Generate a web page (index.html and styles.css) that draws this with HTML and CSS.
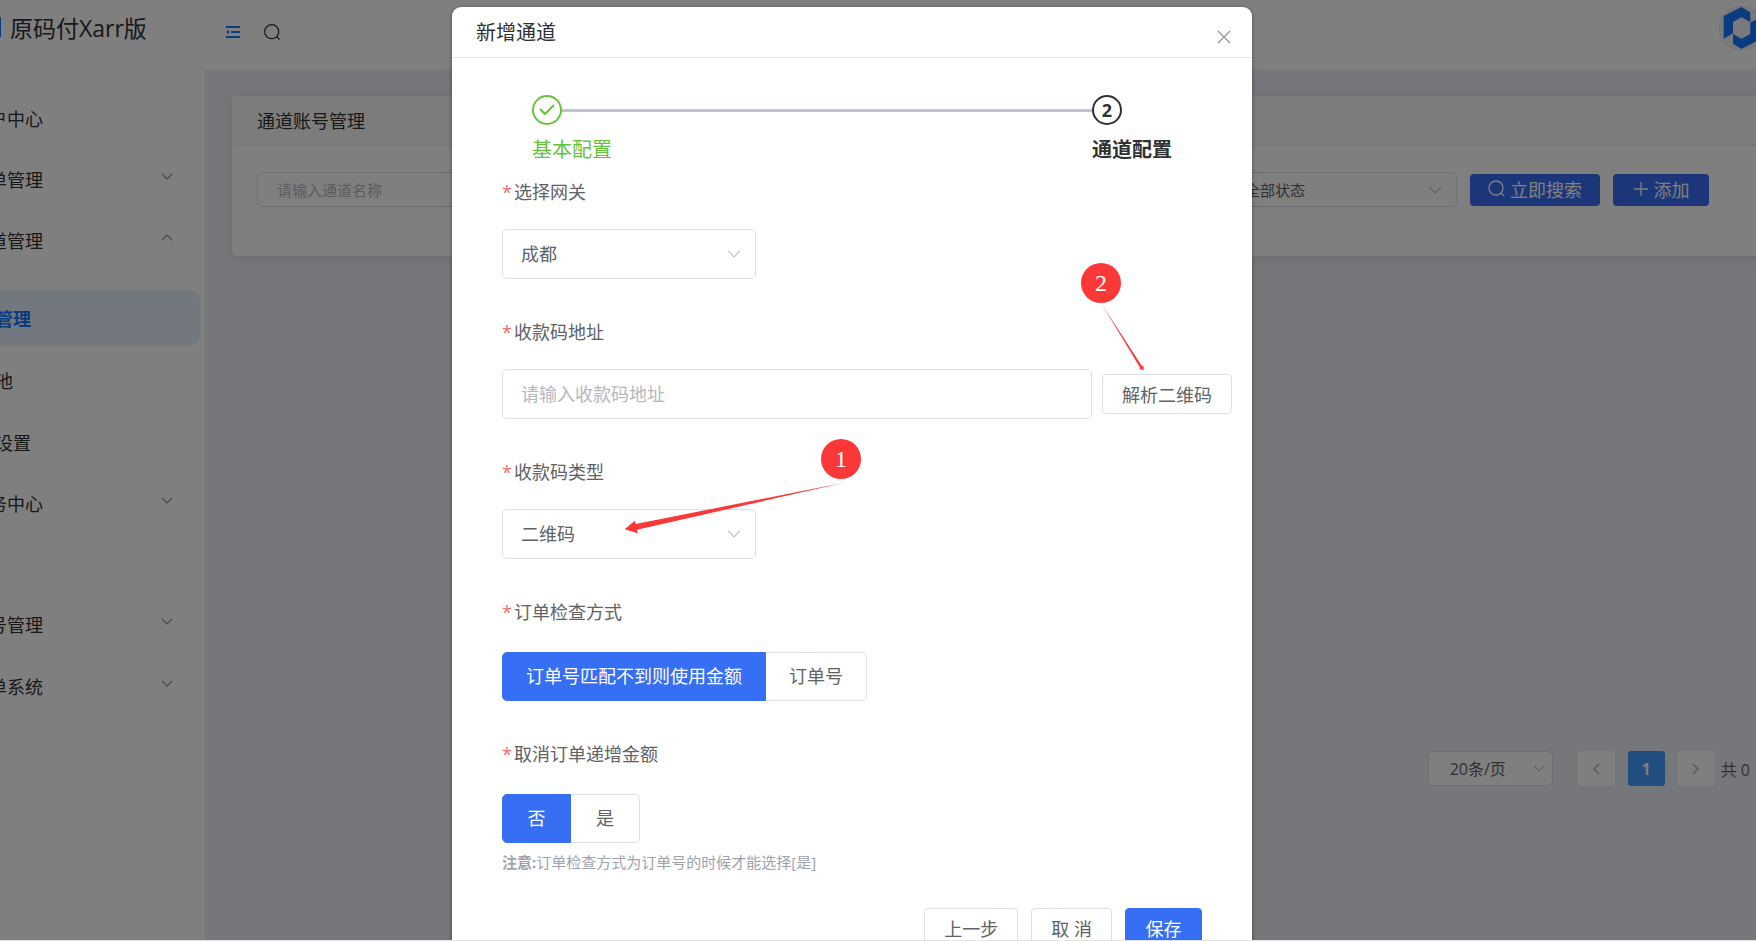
FILE: index.html
```html
<!DOCTYPE html>
<html lang="zh-CN">
<head>
    <meta charset="UTF-8">
    <meta name="viewport" content="width=device-width, initial-scale=1.0">
    <title>通道账号管理</title>
    <link rel="stylesheet" href="styles.css">
</head>
<body>
    <div class="app">
        <aside class="sidebar">
            <div class="brand">
                <span class="brand-mark"></span>
                <span class="brand-name">原码付Xarr版</span>
            </div>
            <nav class="menu">
                <a href="#" class="menu-item"><span>用户中心</span></a>
                <a href="#" class="menu-item"><span>订单管理</span>
                    <svg class="arrow" viewBox="0 0 12 7"><path d="M1 1l5 5 5-5"/></svg></a>
                <a href="#" class="menu-item"><span>通道管理</span>
                    <svg class="arrow" viewBox="0 0 12 7"><path d="M1 6l5-5 5 5"/></svg></a>
                <div class="submenu">
                    <a href="#" class="menu-item active"><span>账号管理</span></a>
                    <a href="#" class="menu-item"><span>轮询池</span></a>
                    <a href="#" class="menu-item"><span>通道设置</span></a>
                </div>
                <a href="#" class="menu-item"><span>服务中心</span>
                    <svg class="arrow" viewBox="0 0 12 7"><path d="M1 1l5 5 5-5"/></svg></a>
                <div class="menu-group">
                    <a href="#" class="menu-item"><span>账号管理</span>
                        <svg class="arrow" viewBox="0 0 12 7"><path d="M1 1l5 5 5-5"/></svg></a>
                    <a href="#" class="menu-item"><span>工单系统</span>
                        <svg class="arrow" viewBox="0 0 12 7"><path d="M1 1l5 5 5-5"/></svg></a>
                </div>
            </nav>
        </aside>

        <div class="main">
            <header class="topbar">
                <button class="icon-btn" aria-label="折叠菜单">
                    <svg width="14" height="12" viewBox="0 0 14 12" fill="#1677ff"><path d="M0 0h14v2H0zM5 5h9v2H5zM0 10h14v2H0zM0 6l3-2v4z"/></svg>
                </button>
                <button class="icon-btn" aria-label="搜索">
                    <svg width="16" height="16" viewBox="0 0 16 16" fill="none" stroke="#303133" stroke-width="1.2"><circle cx="7.7" cy="7.7" r="7"/><path d="M12.5 12.5l3 3"/></svg>
                </button>
                <svg class="avatar" viewBox="1437 18 135 135">
                    <circle cx="1504" cy="85" r="66" fill="#f2f5fa" stroke="#dcdfe6" stroke-width="2"/>
                    <path fill="#1677ff" d="M1451 48L1504 21L1531 37V66L1504 52L1479 66V100L1451 116ZM1557 120L1504 147L1479 131V102L1504 116L1531 102V68L1557 54Z"/>
                </svg>
            </header>

            <div class="content">
                <section class="card">
                    <h2 class="card-title">通道账号管理</h2>
                    <form class="search-form">
                        <input type="text" class="search-input" placeholder="请输入通道名称" aria-label="通道名称">
                        <div class="select-wrap status-select">
                            <select aria-label="状态"><option>全部状态</option></select>
                            <svg class="arrow" viewBox="0 0 14 8"><path d="M1 1l6 6 6-6"/></svg>
                        </div>
                        <button type="button" class="btn-small">
                            <svg width="17" height="17" viewBox="0 0 17 17"><circle cx="8" cy="8" r="7"/><path d="M13 13l3 3"/></svg>立即搜索</button>
                        <button type="button" class="btn-small">
                            <svg width="16" height="16" viewBox="0 0 16 16"><path d="M8 1v14M1 8h14"/></svg>添加</button>
                    </form>
                </section>

                <div class="pagination">
                    <div class="select-wrap page-size">
                        <select aria-label="每页条数"><option>20条/页</option></select>
                        <svg class="arrow" viewBox="0 0 12 7"><path d="M1 1l5 5 5-5"/></svg>
                    </div>
                    <button class="page-btn" aria-label="上一页"><svg width="8" height="12" viewBox="0 0 8 12"><path d="M7 1L2 6l5 5"/></svg></button>
                    <button class="page-btn current">1</button>
                    <button class="page-btn" aria-label="下一页"><svg width="8" height="12" viewBox="0 0 8 12"><path d="M1 1l5 5-5 5"/></svg></button>
                    <span class="total">共 0</span>
                </div>
            </div>
        </div>
    </div>

    <div class="overlay">
        <div class="modal" role="dialog" aria-labelledby="modalTitle">
            <div class="modal-header">
                <h3 id="modalTitle">新增通道</h3>
                <button class="close-btn" aria-label="关闭">
                    <svg width="14" height="14" viewBox="0 0 14 14"><path d="M1 1l12 12M13 1L1 13"/></svg>
                </button>
            </div>

            <div class="steps">
                <div class="step done">
                    <div class="step-head">
                        <span class="step-icon"><svg width="16" height="12" viewBox="0 0 16 12"><path d="M1.500 5.500L6 10l8.500-8.500"/></svg></span>
                        <span class="step-line"></span>
                    </div>
                    <div class="step-title">基本配置</div>
                </div>
                <div class="step current">
                    <div class="step-head"><span class="step-icon">2</span></div>
                    <div class="step-title">通道配置</div>
                </div>
            </div>

            <form class="modal-form">
                <div class="form-item">
                    <label class="form-label" for="gateway">选择网关</label>
                    <div class="select-wrap form-select">
                        <select id="gateway"><option>成都</option></select>
                        <svg class="arrow" viewBox="0 0 14 8"><path d="M1 1l6 6 6-6"/></svg>
                    </div>
                </div>
                <div class="form-item">
                    <label class="form-label" for="codeUrl">收款码地址</label>
                    <div class="code-row">
                        <input type="text" id="codeUrl" placeholder="请输入收款码地址">
                        <button type="button" class="btn">解析二维码</button>
                    </div>
                </div>
                <div class="form-item">
                    <label class="form-label" for="codeType">收款码类型</label>
                    <div class="select-wrap form-select">
                        <select id="codeType"><option>二维码</option></select>
                        <svg class="arrow" viewBox="0 0 14 8"><path d="M1 1l6 6 6-6"/></svg>
                    </div>
                </div>
                <div class="form-item" role="radiogroup" aria-labelledby="checkLabel">
                    <div class="form-label" id="checkLabel">订单检查方式</div>
                    <div class="radio-group">
                        <label><input type="radio" name="check" checked><span>订单号匹配不到则使用金额</span></label>
                        <label><input type="radio" name="check"><span>订单号</span></label>
                    </div>
                </div>
                <div class="form-item" role="radiogroup" aria-labelledby="cancelLabel">
                    <div class="form-label" id="cancelLabel">取消订单递增金额</div>
                    <div class="radio-group">
                        <label><input type="radio" name="cancel" checked><span>否</span></label>
                        <label><input type="radio" name="cancel"><span>是</span></label>
                    </div>
                    <p class="note"><b>注意:</b>订单检查方式为订单号的时候才能选择[是]</p>
                </div>
                <div class="modal-footer">
                    <button type="button" class="btn">上一步</button>
                    <button type="button" class="btn">取 消</button>
                    <button type="button" class="btn primary">保存</button>
                </div>
            </form>

            <!-- Guide marks -->
            <svg class="marks" width="800" height="600" viewBox="0 0 800 600">
                <path d="M393 475.500L183.700 517L182.700 513.700L172.700 522.300L185.700 526.300L185 522.700Z"/>
                <path d="M649.500 296.700L690 359.300L691.300 358.500L691.700 363.300L687.300 361.700L688 360.500Z"/>
            </svg>
            <span class="mark mark-one">1</span>
            <span class="mark mark-two">2</span>
        </div>
    </div>
</body>
</html>
```
FILE: styles.css
```css
* {
    box-sizing: border-box;
}
body {
    margin: 0;
    height: 100vh;
    overflow: hidden;
    position: relative;
    border-bottom: 1px solid #e4e4e6;
    font-family: "Open Sans", "Noto Sans CJK SC", sans-serif;
    font-size: 18px;
    color: #303133;
}
h2, h3, p {
    margin: 0;
    font-weight: normal;
}
a {
    color: inherit;
    text-decoration: none;
}
button, input, select {
    font: inherit;
    color: inherit;
}
button {
    cursor: pointer;
}
svg {
    flex: none;
}
.arrow {
    width: 12px;
    fill: none;
    stroke: #909399;
    stroke-width: 1.2;
}

/* Page behind the dialog, wider than the window on both sides */
.app {
    display: flex;
    height: 100%;
    margin: 0 -64px;
    background: #eceef4;
}
.sidebar {
    width: 269px;
    flex: none;
    background: #fff;
}
.brand {
    display: flex;
    align-items: center;
    gap: 9px;
    height: 54px;
    padding-left: 45px;
    font-size: 23px;
}
.brand-mark {
    width: 20px;
    height: 20px;
    background: #1677ff;
}
.menu {
    display: flex;
    flex-direction: column;
    gap: 5px;
    padding: 36px 5px 0 10px;
}
.menu-item {
    display: flex;
    align-items: center;
    justify-content: space-between;
    height: 56px;
    padding: 0 27px 0 25px;
    border-radius: 12px;
}
.menu-item .arrow {
    margin-bottom: 6px;
}
.submenu, .menu-group {
    display: flex;
    flex-direction: column;
    gap: 6px;
}
.submenu {
    margin-top: 17px;
}
.submenu .menu-item {
    padding-left: 13px;
}
.menu-group {
    margin-top: 60px;
}
.menu-item.active {
    background: #e6f0ff;
    color: #1677ff;
    font-weight: bold;
}
.main {
    flex: 1;
    display: flex;
    flex-direction: column;
}
.topbar {
    display: flex;
    align-items: center;
    gap: 24px;
    height: 70px;
    padding: 0 56px 6px 21px;
    background: #fff;
}
.icon-btn {
    display: flex;
    padding: 0;
    border: none;
    background: none;
}
.avatar {
    width: 45px;
    height: 45px;
    margin-left: auto;
    margin-bottom: 8px;
}
.content {
    flex: 1;
    display: flex;
    flex-direction: column;
    justify-content: space-between;
    padding: 26px 26px 154px 27px;
}
.card {
    background: #fff;
    border-radius: 5px;
    box-shadow: 0 2px 12px rgba(0, 0, 0, 0.1);
    padding-bottom: 49px;
}
.card-title {
    height: 50px;
    padding-left: 25px;
    line-height: 50px;
    font-size: 18px;
    background: #f9f9f9;
    border-bottom: 1px solid #ebebeb;
    border-radius: 5px;
}
.search-form {
    display: flex;
    align-items: center;
    gap: 13px;
    padding: 26px 85px 0 25px;
}
.search-input {
    flex: 1;
    height: 35px;
    padding: 0 19px;
    border: 1px solid #dcdfe6;
    border-radius: 5px;
    font-size: 15px;
    background: #fff;
}
::placeholder {
    color: #b4b8c0;
    opacity: 1;
}
.select-wrap {
    position: relative;
}
.select-wrap select {
    appearance: none;
    width: 100%;
    height: 100%;
    padding: 0 18px;
    border: 1px solid #dcdfe6;
    border-radius: 5px;
    background: #fff;
    color: #606266;
}
.select-wrap .arrow {
    position: absolute;
    right: 15px;
    top: 0;
    bottom: 0;
    width: 14px;
    margin: auto;
    stroke: #c0c4cc;
    pointer-events: none;
}
.status-select {
    width: 231px;
    height: 35px;
    font-size: 15px;
}
.btn-small {
    display: flex;
    align-items: center;
    justify-content: center;
    gap: 5px;
    min-width: 96px;
    height: 32px;
    padding: 0 18px 2px;
    border: none;
    border-radius: 4px;
    background: #366ef4;
    color: #fff;
}
.btn-small svg {
    fill: none;
    stroke: #fff;
    stroke-width: 1.3;
}
.pagination {
    display: flex;
    align-items: center;
    justify-content: flex-end;
    gap: 13px;
    padding-right: 44px;
    font-size: 16px;
    color: #606266;
}
.page-size {
    width: 125px;
    height: 35px;
    margin-right: 12px;
}
.page-size select {
    padding: 0 21px;
}
.page-size .arrow {
    right: 8px;
    width: 12px;
}
.page-btn {
    display: flex;
    align-items: center;
    justify-content: center;
    width: 37px;
    height: 35px;
    padding: 0;
    border: none;
    border-radius: 3px;
    background: #fff;
}
.page-btn svg {
    fill: none;
    stroke: #c0c4cc;
    stroke-width: 2;
}
.page-btn.current {
    background: #409eff;
    color: #fff;
    font-weight: bold;
}
.total {
    margin-left: -7px;
}

/* Dialog */
.overlay {
    position: absolute;
    inset: 0;
    display: flex;
    justify-content: center;
    align-items: flex-start;
    padding: 7px 52px 0 0;
    overflow: hidden;
    background: rgba(0, 0, 0, 0.5);
}
.modal {
    position: relative;
    width: 800px;
    padding-bottom: 30px;
    background: #fff;
    border-radius: 9px;
    box-shadow: 0 1px 4px rgba(0, 0, 0, 0.4);
}
.modal-header {
    display: flex;
    align-items: center;
    justify-content: space-between;
    height: 51px;
    padding: 0 21px 2px 24px;
    border-bottom: 1px solid #e4e4e6;
}
.modal-header h3 {
    font-size: 20px;
}
.close-btn {
    display: flex;
    padding: 11px 0 0;
    border: none;
    background: none;
}
.close-btn svg {
    fill: none;
    stroke: #909399;
    stroke-width: 1.3;
}
.steps {
    display: flex;
    padding: 37px 80px 0;
    font-size: 20px;
}
.step.done {
    flex: 1;
    color: #67c23a;
}
.step.current {
    font-weight: bold;
}
.step-head {
    display: flex;
    align-items: center;
}
.step-icon {
    display: flex;
    align-items: center;
    justify-content: center;
    width: 30px;
    height: 30px;
    border: 2px solid;
    border-radius: 50%;
    font-size: 18px;
}
.step-icon svg {
    fill: none;
    stroke: #67c23a;
    stroke-width: 2;
    stroke-linecap: round;
}
.step-line {
    flex: 1;
    height: 3px;
    background: #c0c4cc;
}
.step-title {
    margin-top: 4px;
    line-height: 42px;
}
.modal-form {
    padding: 2px 50px 0;
    color: #606266;
}
.form-item {
    margin-bottom: 34px;
}
.form-label {
    display: block;
    margin-bottom: 18px;
    line-height: 38px;
}
.form-label::before {
    content: "*";
    margin-right: 2px;
    color: #f56c6c;
}
.form-select {
    width: 254px;
    height: 50px;
}
.code-row {
    display: flex;
    align-items: center;
    gap: 10px;
    margin-right: -30px;
}
.code-row input {
    flex: 1;
    min-width: 0;
    height: 50px;
    padding: 0 18px;
    border: 1px solid #dcdfe6;
    border-radius: 5px;
}
.btn {
    min-width: 77px;
    height: 40px;
    padding: 0 19px;
    border: 1px solid #dcdfe6;
    border-radius: 4px;
    background: #fff;
}
.btn.primary {
    background: #366ef4;
    border-color: #366ef4;
    color: #fff;
}
.radio-group {
    display: flex;
    padding-top: 3px;
}
.radio-group label {
    position: relative;
}
.radio-group input {
    position: absolute;
    inset: 0;
    margin: 0;
    opacity: 0;
}
.radio-group span {
    display: block;
    min-width: 69px;
    padding: 0 23px;
    line-height: 47px;
    text-align: center;
    border: 1px solid #dcdfe6;
    border-left: none;
    border-radius: 0 5px 5px 0;
}
.radio-group label:first-child span {
    border-left: 1px solid #dcdfe6;
    border-radius: 5px 0 0 5px;
}
.radio-group input:checked + span {
    background: #366ef4;
    border-color: #366ef4 !important;
    color: #fff;
}
.note {
    margin-top: 9px;
    font-size: 15px;
    line-height: 20px;
    color: #9ca3af;
}
.modal-footer {
    display: flex;
    justify-content: flex-end;
    gap: 13px;
    padding-top: 2px;
}
.marks {
    position: absolute;
    left: 0;
    top: 0;
    fill: #fb3838;
    pointer-events: none;
}
.mark {
    position: absolute;
    width: 40px;
    height: 40px;
    border-radius: 50%;
    background: #fb3838;
    color: #fff;
    font: 24px/40px "Liberation Serif", serif;
    text-align: center;
}
.mark-one {
    left: 369px;
    top: 432px;
}
.mark-two {
    left: 629px;
    top: 256px;
}
```
